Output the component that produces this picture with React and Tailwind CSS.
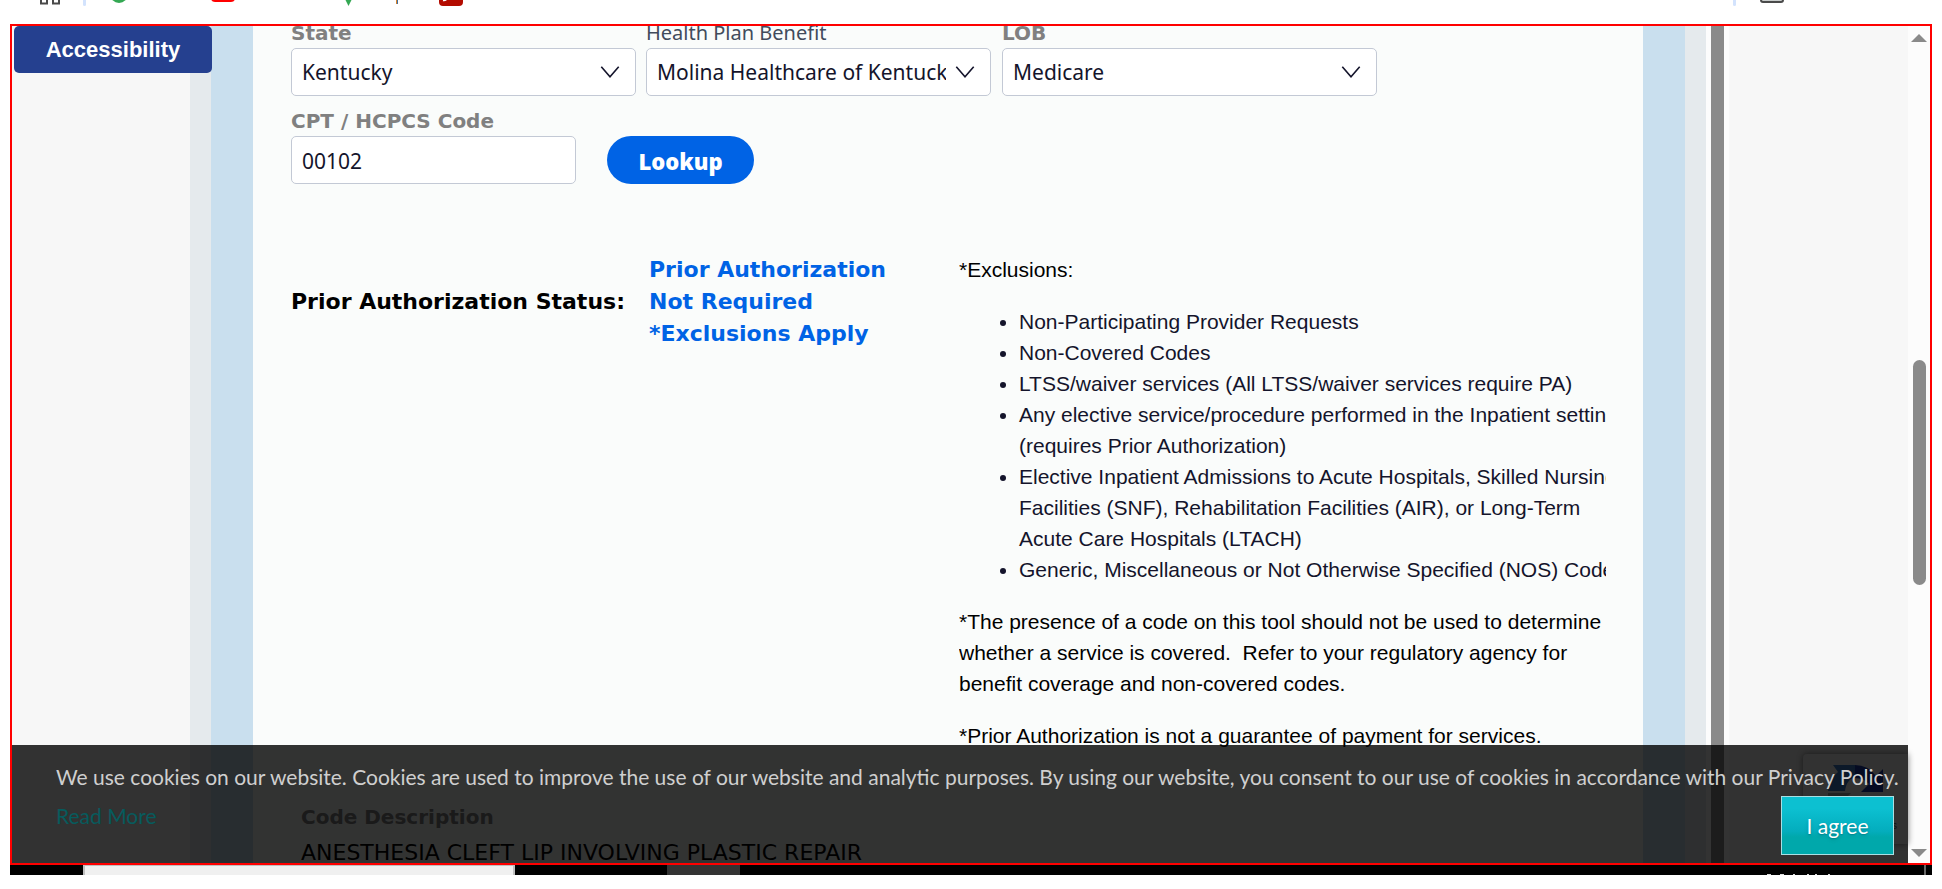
function Chevron() {
  return (
    <svg viewBox="0 0 19 12" className="pointer-events-none col-start-1 row-start-1 mr-4 h-3 w-5 self-center justify-self-end" fill="none" stroke="#14142b" strokeWidth="1.6" aria-hidden="true">
      <path d="M0.8 0.8 9.5 10.8 18.2 0.8" />
    </svg>
  );
}

function SelectField({ id, label, labelClass, value, className }) {
  return (
    <div className={className}>
      <label htmlFor={id} className={labelClass}>{label}</label>
      <div className="grid">
        <select id={id} defaultValue={value} className="col-start-1 row-start-1 h-12 w-full appearance-none rounded-[5px] border border-[#c3c9d5] bg-white pt-[2px] pr-11 pl-[10px] font-['Noto_Sans',sans-serif] text-[21px] text-[#14142b]">
          <option>{value}</option>
        </select>
        <Chevron />
      </div>
    </div>
  );
}

const boldLabel = "block h-7 font-['DejaVu_Sans',sans-serif] text-[20px] leading-[26px] font-bold whitespace-nowrap text-[#808080]";
const plainLabel = "block h-7 font-['Noto_Sans',sans-serif] text-[20px] leading-[26px] whitespace-nowrap text-[#414b5c]";

const exclusions = [
  ["Non-Participating Provider Requests"],
  ["Non-Covered Codes"],
  ["LTSS/waiver services (All LTSS/waiver services require PA)"],
  ["Any elective service/procedure performed in the Inpatient setting", "(requires Prior Authorization)"],
  ["Elective Inpatient Admissions to Acute Hospitals, Skilled Nursing", "Facilities (SNF), Rehabilitation Facilities (AIR), or Long-Term", "Acute Care Hospitals (LTACH)"],
  ["Generic, Miscellaneous or Not Otherwise Specified (NOS) Codes"],
];

function BookmarksStrip() {
  return (
    <div className="flex h-6 items-start overflow-hidden pl-10">
      <svg viewBox="0 0 1900 8" className="h-2 w-[1900px] shrink-0" aria-hidden="true">
        <g fill="none" stroke="#4a4a4a" strokeWidth="2">
          <path d="M1 -4V3.5H7V-4M13 -4V3.5H19V-4" />
        </g>
        <rect x="43" y="-4" width="3" height="10" rx="1.5" fill="#d3e3fd" />
        <circle cx="79" cy="-6" r="9" fill="#34a853" />
        <rect x="171" y="-12" width="24" height="14" rx="4" fill="#f00" />
        <path d="M305 -1h7l-3.500 7z" fill="#34a853" />
        <rect x="356" y="-4" width="1" height="8" fill="#d9822b" />
        <rect x="357" y="-4" width="1" height="8" fill="#3f6f9f" />
        <rect x="399" y="-14" width="24" height="20" rx="4" fill="#b30b00" />
        <path d="M403 0.500Q405 1 407 -1" fill="none" stroke="#fff" strokeWidth="1.5" />
        <rect x="1693" y="-4" width="3" height="10" rx="1.5" fill="#d3e3fd" />
        <rect x="1721" y="-8" width="22" height="10" rx="2" fill="#c8cccb" stroke="#4a4a4a" strokeWidth="2" />
      </svg>
    </div>
  );
}

function Results() {
  return (
    <section className="mt-[66px] flex text-black">
      <h2 className="w-[358px] shrink-0 pt-9 font-['DejaVu_Sans',sans-serif] text-[22px] leading-8 font-bold whitespace-nowrap">Prior Authorization Status:</h2>
      <p className="w-[310px] shrink-0 pt-1 font-['DejaVu_Sans',sans-serif] text-[22px] leading-8 font-bold text-[#0063e5]">
        Prior Authorization<br />Not Required<br />*Exclusions Apply
      </p>
      <div className="w-[647px] overflow-hidden pt-1 font-['Liberation_Sans',sans-serif] text-[21px] leading-[31px] whitespace-nowrap">
        <p>*Exclusions:</p>
        <ul className="my-[21px] list-disc pl-[60px] text-[#14142b]">
          {exclusions.map((lines) => (
            <li key={lines[0]}>
              {lines.map((line) => <span key={line} className="block first:inline">{line}</span>)}
            </li>
          ))}
        </ul>
        <p>
          *The presence of a code on this tool should not be used to determine<br />
          whether a service is covered.&nbsp; Refer to your regulatory agency for<br />
          benefit coverage and non-covered codes.
        </p>
        <p className="mt-[21px]">*Prior Authorization is not a guarantee of payment for services.</p>
      </div>
    </section>
  );
}

function CookieBar() {
  return (
    <aside className="absolute right-[22px] bottom-0 left-0 h-[118px] bg-black/80 pt-3 pr-[14px] pl-11 font-['Lato',sans-serif] text-[21px] leading-[39px] text-[#cfcfcf]">
      <p className="whitespace-nowrap">We use cookies on our website. Cookies are used to improve the use of our website and analytic purposes. By using our website, you consent to our use of cookies in accordance with our Privacy Policy.</p>
      <div className="flex items-start justify-between">
        <a href="#more" className="text-[#075b5d]">Read More</a>
        <button type="button" className="h-[59px] w-[113px] border border-[#a9dfe3] bg-linear-to-b from-[#0cc0d1] from-20% via-[#04adbd] via-60% to-[#00a8ab] to-70% text-white text-shadow-md">I agree</button>
      </div>
    </aside>
  );
}

function Captcha() {
  return (
    <div className="absolute right-[22px] bottom-[19px] h-[90px] w-[105px] overflow-hidden rounded-l-sm bg-[#f9f9f9] shadow-[0_0_6px_#808080]">
      <svg viewBox="0 0 56 56" className="mt-[10px] ml-[25px] size-14" aria-hidden="true">
        <path d="M5 1H27V14C21 14 18 20 17 27H0Q0 16 10 8Z" fill="#3f7fcb" />
        <path d="M27 1Q40 1 48 12L55 5V28H33L41 20Q36 14 27 14Z" fill="#1c3aa9" />
        <path d="M0 29H23L15 37Q27 47 40 34L49 42Q29 63 8 45L0 52Z" fill="#ababab" />
      </svg>
      <p className="pr-[11px] text-right font-['Liberation_Sans',sans-serif] text-[10px] leading-3 text-[#555]">Terms</p>
    </div>
  );
}

function PageScrollbar() {
  return (
    <div className="flex w-[22px] shrink-0 flex-col items-center bg-[#fcfcfc] pt-2 pb-[6px]" aria-hidden="true">
      <svg viewBox="0 0 16 8" className="h-2 w-4 fill-[#8a8a8a]"><path d="M0 8 8 0 16 8z" /></svg>
      <div className="mt-[318px] h-[225px] w-[13px] rounded-full bg-[#8a8a8a]" />
      <svg viewBox="0 0 16 8" className="mt-auto h-2 w-4 fill-[#8a8a8a]"><path d="M0 0 8 8 16 0z" /></svg>
    </div>
  );
}

export default function App() {
  return (
    <div className="overflow-hidden bg-white pr-[10px] pb-[14px] pl-[10px]">
      <div className="-ml-[10px]"><BookmarksStrip /></div>
      <div className="relative flex h-[841px] overflow-hidden border-2 border-[#f00] bg-[#f7f7f7]">
        <div className="w-[178px] shrink-0" />
        <main className="flex grow overflow-hidden">
          <div className="grow border-x-[21px] border-[#e5eaed] bg-[#c9dfee] px-[42px]">
            <div className="flow-root h-full bg-[#fafcfb] pl-[38px]">
              <form className="-mt-[6px]" onSubmit={(event) => event.preventDefault()}>
                <div className="flex items-start">
                  <SelectField id="state" label="State" labelClass={boldLabel} value="Kentucky" className="w-[345px]" />
                  <SelectField id="plan" label="Health Plan Benefit" labelClass={plainLabel} value="Molina Healthcare of Kentucky" className="ml-[10px] w-[345px]" />
                  <SelectField id="lob" label="LOB" labelClass={boldLabel} value="Medicare" className="ml-[11px] w-[375px]" />
                </div>
                <div className="mt-3 flex items-end">
                  <div>
                    <label htmlFor="code" className={boldLabel}>CPT / HCPCS Code</label>
                    <input id="code" defaultValue="00102" className="block h-12 w-[285px] rounded-[5px] border border-[#c3c9d5] bg-white px-[10px] pt-[2px] font-['Noto_Sans',sans-serif] text-[21px] text-[#14142b]" />
                  </div>
                  <button type="submit" className="ml-[31px] h-12 w-[147px] rounded-full bg-[#0063e5] pt-[2px] font-['Open_Sans',sans-serif] text-[22px] font-extrabold text-white">Lookup</button>
                </div>
              </form>
              <Results />
              <section className="mt-12 pl-[10px] font-['DejaVu_Sans',sans-serif] leading-9">
                <h3 className="text-[20px] font-bold text-[#808080]">Code Description</h3>
                <p className="text-[22px] text-black">ANESTHESIA CLEFT LIP INVOLVING PLASTIC REPAIR</p>
              </section>
            </div>
          </div>
          <div className="w-[23px] shrink-0 border-x-5 border-[#fcfcfc] bg-[#8a8a8a]" />
        </main>
        <div className="w-[179px] shrink-0" />
        <PageScrollbar />
        <button type="button" className="absolute top-0 left-[2px] h-[47px] w-[198px] rounded-[5px] bg-[#25408f] font-['Liberation_Sans',sans-serif] text-[22px] font-bold text-white">Accessibility</button>
        <Captcha />
        <CookieBar />
      </div>
      <footer className="flex h-[10px] bg-black">
        <div className="ml-[73px] w-[432px] border-x-2 border-t border-[#c0c0c0] bg-[#f0f0f0]" />
        <div className="ml-[152px] w-[73px] bg-[#333]" />
        <svg viewBox="0 0 66 2" className="mr-[92px] ml-auto h-[2px] w-[66px] self-end fill-[#ddd]" aria-hidden="true">
          <path d="M1 1h4v1h-4zM14 1h4v1h-4zM27 1h2v1h-2zM41 1h2v1h-2zM49 1h2v1h-2zM62 1h2v1h-2z" />
        </svg>
        <div className="mr-[6px] w-[2px] bg-[#666]" />
      </footer>
    </div>
  );
}
